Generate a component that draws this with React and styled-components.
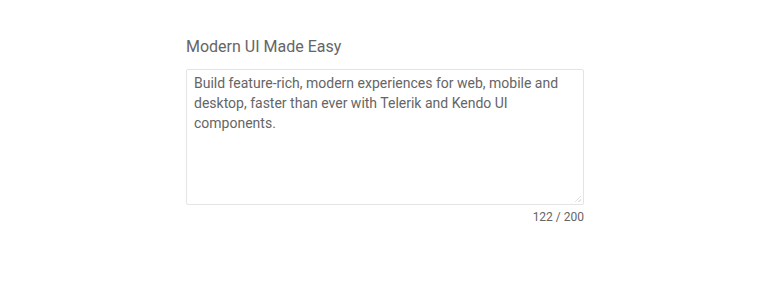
import React, { useState } from 'react'
import styled, { createGlobalStyle } from 'styled-components'

const GlobalStyle = createGlobalStyle`
  body {
    margin: 0;
    background: #ffffff;
    font-family: Roboto, "Liberation Sans", sans-serif;
  }
`

const Page = styled.div`
  display: flex;
  justify-content: center;
  padding-top: 37px;
`

const Field = styled.div`
  width: 398px;
  display: flex;
  flex-direction: column;
`

const Label = styled.label`
  font-size: 16px;
  line-height: 20px;
  color: #656565;
  margin-bottom: 12px;
`

const Area = styled.textarea`
  box-sizing: border-box;
  width: 398px;
  height: 136px;
  padding: 3px 7px;
  border: 1px solid #e4e4e4;
  border-radius: 2px;
  font-family: Roboto, "Liberation Sans", sans-serif;
  font-size: 14px;
  line-height: 20px;
  color: #656565;
  outline: none;
  resize: vertical;
  margin: 0;

  &::-webkit-resizer {
    background:
      linear-gradient(135deg, transparent 45%, #e2e2e2 45%, #e2e2e2 58%, transparent 58%,
        transparent 72%, #e2e2e2 72%, #e2e2e2 85%, transparent 85%)
      right 2px bottom 2px / 6px 6px no-repeat;
  }
`

const Counter = styled.div`
  align-self: flex-end;
  font-size: 12px;
  line-height: 16px;
  color: #656565;
  margin-top: 4px;
`

export default function App() {
  const [text, setText] = useState(
    'Build feature-rich, modern experiences for web, mobile and desktop, faster than ever with Telerik and Kendo UI components.'
  )
  return (
    <>
      <GlobalStyle />
      <Page>
        <Field>
          <Label>Modern UI Made Easy</Label>
          <Area value={text} maxLength={200} onChange={(e) => setText(e.target.value)} />
          <Counter>{text.length} / 200</Counter>
        </Field>
      </Page>
    </>
  )
}
